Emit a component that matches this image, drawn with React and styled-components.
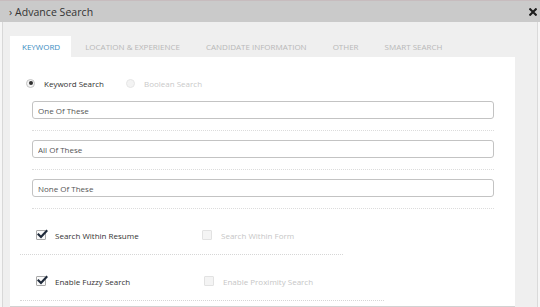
import React from "react";
import styled, { createGlobalStyle } from "styled-components";

const Global = createGlobalStyle`
  html, body { margin: 0; padding: 0; background: #ffffff; }
  body { font-family: "Open Sans", "Liberation Sans", sans-serif; }
  * { box-sizing: border-box; }
`;

const Dialog = styled.div`
  width: 540px;
  height: 307px;
  display: flex;
  flex-direction: column;
  overflow: hidden;
  background: #f6f6f6;
`;

const Header = styled.div`
  height: 22px;
  flex: none;
  display: flex;
  align-items: center;
  justify-content: space-between;
  background: #cacaca;
  border-top: 1px solid #c7bcbe;
  padding: 0 3px 0 9px;
`;

const Title = styled.div`
  font-size: 10.5px;
  color: #333;
  letter-spacing: 0.05px;
`;

const Body = styled.div`
  flex: 1;
  min-height: 0;
  display: flex;
  flex-direction: column;
  background: #efefef;
  margin: 0 2px 0 2px;
  border-left: 1px solid #d8d8d8;
  border-right: 1px solid #dadada;
  padding: 14px 22px 0 7px;
`;

const TabBar = styled.div`
  display: flex;
  gap: 2px;
  height: 21px;
  flex: none;
`;

const Tab = styled.div`
  display: flex;
  align-items: center;
  padding: 0 ${(p) => p.$pad}px 0 12px;
  font-size: 8px;
  text-transform: uppercase;
  color: ${(p) => (p.$active ? "#3b8dc2" : "#b8b8b8")};
  background: ${(p) => (p.$active ? "#ffffff" : "transparent")};
  white-space: nowrap;
`;

const Panel = styled.div`
  flex: 1;
  background: #ffffff;
  padding-top: 20px;
  display: flex;
  flex-direction: column;
`;

const RadioRow = styled.div`
  display: flex;
  align-items: center;
  height: 12px;
  padding-left: 16px;
  margin-bottom: 12px;
`;

const RadioItem = styled.label`
  display: flex;
  align-items: center;
  gap: 9px;
  margin-right: 22px;
  font-size: 8px;
  color: ${(p) => (p.$muted ? "#c9c9c9" : "#333")};
`;

const RadioDot = styled.span`
  width: 9px;
  height: 9px;
  border-radius: 50%;
  border: 1px solid ${(p) => (p.$muted ? "#e6e6e6" : "#c4c4c4")};
  background: ${(p) => (p.$muted ? "#f3f3f3" : "#f4f4f4")};
  display: flex;
  align-items: center;
  justify-content: center;
  &::after {
    content: "";
    width: 4px;
    height: 4px;
    border-radius: 50%;
    background: ${(p) => (p.$checked ? "#2f2f2f" : "transparent")};
  }
`;

const Fields = styled.div`
  display: flex;
  flex-direction: column;
  gap: 9px;
`;

const Field = styled.div`
  margin: 0 21px 0 22px;
  padding-bottom: 11px;
  border-bottom: 1px dotted #dcdcdc;
`;

const Input = styled.input`
  display: block;
  width: 100%;
  height: 18px;
  border: 1px solid #c3c3c3;
  border-radius: 3px;
  padding: 0 0 0 5px;
  font-family: "Open Sans", "Liberation Sans", sans-serif;
  font-size: 8px;
  color: #444;
  outline: none;
  &::placeholder { color: #555; opacity: 1; }
`;

const CheckRow = styled.div`
  width: ${(p) => p.$width}px;
  margin-left: 10px;
  padding: 19px 0 12px 16px;
  display: flex;
  align-items: center;
  border-bottom: 1px dotted #d6d6d6;
`;

const CheckItem = styled.label`
  display: flex;
  align-items: center;
  gap: 9px;
  width: ${(p) => (p.$w ? `${p.$w}px` : "auto")};
  font-size: 8px;
  color: ${(p) => (p.$muted ? "#c6c6c6" : "#333")};
  height: 14px;
`;

const Box = styled.span`
  position: relative;
  width: 10px;
  height: 10px;
  flex: none;
  border: 1px solid ${(p) => (p.$muted ? "#e2e2e2" : "#a9a9a9")};
  background: ${(p) => (p.$muted ? "#f4f4f4" : "#fafafa")};
  border-radius: 1px;
  svg { position: absolute; left: 0px; top: -2px; }
`;

const BottomLine = styled.div`
  margin-top: 5px;
  height: 1px;
  background: #d2d2d2;
`;

const Check = () => (
  <svg width="11" height="11" viewBox="0 0 11 11">
    <path d="M1.5 5.5 L4 8 L9.5 2" fill="none" stroke="#1f2a3a" strokeWidth="2.2" strokeLinecap="square" />
  </svg>
);

const CloseIcon = () => (
  <svg width="8" height="8" viewBox="0 0 8 8">
    <path d="M1.2 1.2 L6.8 6.8 M6.8 1.2 L1.2 6.8" stroke="#1e1e1e" strokeWidth="2.1" strokeLinecap="square" />
  </svg>
);

const tabs = [
  { label: "Keyword", active: true, pad: 11 },
  { label: "Location & Experience", pad: 12 },
  { label: "Candidate Information", pad: 12 },
  { label: "Other", pad: 12 },
  { label: "Smart Search", pad: 12 },
];

const fields = ["One Of These", "All Of These", "None Of These"];

export default function App() {
  return (
    <>
      <Global />
      <Dialog>
        <Header>
          <Title>› Advance Search</Title>
          <CloseIcon />
        </Header>
        <Body>
          <TabBar>
            {tabs.map((t) => (
              <Tab key={t.label} $active={t.active} $pad={t.pad}>
                {t.label}
              </Tab>
            ))}
          </TabBar>
          <Panel>
            <RadioRow>
              <RadioItem>
                <RadioDot $checked />
                Keyword Search
              </RadioItem>
              <RadioItem $muted>
                <RadioDot $muted />
                Boolean Search
              </RadioItem>
            </RadioRow>
            <Fields>
              {fields.map((f) => (
                <Field key={f}>
                  <Input placeholder={f} readOnly />
                </Field>
              ))}
            </Fields>
            <CheckRow $width={323}>
              <CheckItem $w={166}>
                <Box><Check /></Box>
                Search Within Resume
              </CheckItem>
              <CheckItem $muted>
                <Box $muted />
                Search Within Form
              </CheckItem>
            </CheckRow>
            <CheckRow $width={364}>
              <CheckItem $w={168}>
                <Box><Check /></Box>
                Enable Fuzzy Search
              </CheckItem>
              <CheckItem $muted>
                <Box $muted />
                Enable Proximity Search
              </CheckItem>
            </CheckRow>
            <BottomLine />
          </Panel>
        </Body>
      </Dialog>
    </>
  );
}
